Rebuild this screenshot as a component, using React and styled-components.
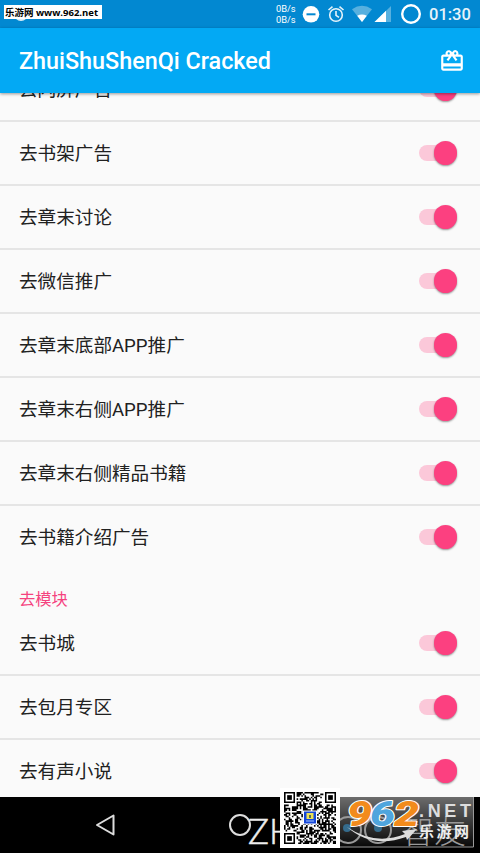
import React from 'react';
import styled, { createGlobalStyle } from 'styled-components';

const GlobalStyle = createGlobalStyle`
  * {
    box-sizing: border-box;
  }

  body {
    margin: 0;
    background: #000;
    font-family: Roboto, 'Noto Sans CJK SC', sans-serif;
  }
`;

const Screen = styled.div`
  position: relative;
  display: flex;
  flex-direction: column;
  width: 480px;
  height: 853px;
  overflow: hidden;
  background: #fafafa;
`;

const StatusBar = styled.div`
  display: flex;
  align-items: center;
  justify-content: flex-end;
  flex: none;
  height: 28px;
  padding-right: 9px;
  background: #0288d1;
  color: #fff;
`;

const NetSpeed = styled.div`
  width: 22px;
  margin-right: 4px;
  font-size: 9.3px;
  line-height: 11px;
  white-space: nowrap;
`;

const Clock = styled.div`
  width: 42px;
  margin-left: 7px;
  padding-top: 2px;
  font-size: 16.5px;
  font-weight: 500;
  line-height: 28px;
  color: #e6f3fa;
  white-space: nowrap;
`;

const SiteTag = styled.div`
  position: absolute;
  top: 5px;
  left: 4px;
  width: 98px;
  height: 14px;
  padding-left: 1px;
  background: #fff;
  color: #000;
  font-family: 'Open Sans', 'Noto Sans CJK SC', sans-serif;
  font-size: 9.5px;
  font-weight: 700;
  line-height: 15px;
  white-space: nowrap;
`;

const HiddenDot = styled.div`
  position: absolute;
  top: 7px;
  left: 14px;
  width: 14px;
  height: 14px;
  border-radius: 50%;
  background: #d9edf8;
`;

const AppBar = styled.header`
  position: relative;
  z-index: 1;
  display: flex;
  align-items: center;
  justify-content: space-between;
  flex: none;
  height: 65px;
  padding: 1px 15px 0 19px;
  background: #03a9f4;
  box-shadow: 0 1px 3px rgba(0, 0, 0, 0.4);
`;

const Title = styled.h1`
  margin: 0;
  color: #fff;
  font-size: 23.35px;
  font-weight: 500;
  line-height: 32px;
`;

const List = styled.main`
  flex: 1;
  min-height: 0;
  overflow: hidden;
`;

const Section = styled.section`
  margin-top: ${({ $scrolled }) => ($scrolled ? '-35px' : '0')};
`;

const Row = styled.div`
  display: flex;
  align-items: center;
  justify-content: space-between;
  height: 64px;
  padding: 0 25px 0 19px;
  border-bottom: 2px solid #e5e5e5;

  &:last-child {
    border-bottom-color: transparent;
  }
`;

const Label = styled.span`
  padding-top: 2px;
  color: #212121;
  font-size: 18.6px;
  line-height: 28px;
`;

const SectionTitle = styled.h2`
  height: 42px;
  margin: 0;
  padding: 18px 19px 0;
  color: #f5427e;
  font-size: 16.3px;
  font-weight: 400;
  line-height: 24px;
`;

const Track = styled.span`
  display: flex;
  align-items: center;
  justify-content: flex-end;
  width: 36px;
  height: 16px;
  border-radius: 8px;
  background: #fbc8d9;
`;

const Thumb = styled.span`
  flex: none;
  width: 23.5px;
  height: 23.5px;
  margin-right: -2px;
  border-radius: 50%;
  background: #fc4080;
  box-shadow: 0 1px 2px rgba(0, 0, 0, 0.4);
`;

const NavBar = styled.nav`
  display: flex;
  align-items: center;
  flex: none;
  height: 56px;
  padding-left: 94px;
  background: #000;
`;

const HomeIcon = styled.svg`
  margin-left: 111px;
`;

const Watermark = styled.div`
  position: absolute;
  top: 811px;
  left: 248px;
  color: #eee;
  font-family: Lato, 'Noto Sans CJK SC', sans-serif;
  font-size: 35px;
  font-weight: 300;
  line-height: 38px;
  white-space: nowrap;
  -webkit-text-stroke: 0.5px #eee;
`;

const QrCode = styled.svg`
  position: absolute;
  top: 788px;
  left: 280px;
`;

const SiteLogo = styled.svg`
  position: absolute;
  top: 797px;
  left: 340px;
`;

const adRows = [
  '去闪屏广告',
  '去书架广告',
  '去章末讨论',
  '去微信推广',
  '去章末底部APP推广',
  '去章末右侧APP推广',
  '去章末右侧精品书籍',
  '去书籍介绍广告',
];

const moduleRows = ['去书城', '去包月专区', '去有声小说'];

const QR_SIZE = 33;
const FINDERS = [[0, 0], [QR_SIZE - 7, 0], [0, QR_SIZE - 7]];

const buildModules = () => {
  let seed = 962;
  let d = '';
  for (let y = 0; y < QR_SIZE; y += 1) {
    for (let x = 0; x < QR_SIZE; x += 1) {
      seed = (seed * 1103515245 + 12345) % 2147483648;
      const inFinder = FINDERS.some(([fx, fy]) => x >= fx - 1 && x <= fx + 7 && y >= fy - 1 && y <= fy + 7);
      if (!inFinder && seed / 2147483648 > 0.48) d += `M${x} ${y}h1v1h-1z`;
    }
  }
  return d;
};

const qrPath = buildModules();

const SettingRow = ({ label }) => (
  <Row>
    <Label>{label}</Label>
    <Track>
      <Thumb />
    </Track>
  </Row>
);

const StatusIcons = () => (
  <svg width="120" height="28" viewBox="0 0 120 28" fill="none">
    <circle cx="9" cy="14.3" r="8.3" fill="#fff" />
    <path d="M4.5 14.3h9" stroke="#0288d1" strokeWidth="2" />
    <g stroke="#e6f3fa" strokeWidth="1.6">
      <circle cx="34" cy="15" r="6.3" />
      <path d="M34 11v4.3l3 2M26.5 10l4-3.4M41.5 10l-4-3.4" />
    </g>
    <path d="M50 9.2Q60 2.5 70 9.2L60 22z" fill="#57b0df" />
    <path d="M55.2 15.8Q60 13 64.8 15.8L60 22z" fill="#fff" />
    <path d="M89 6v16H72.5z" fill="#57b0df" />
    <path d="M84 10.8V22H72.5z" fill="#fff" />
    <circle cx="109" cy="14" r="8.8" stroke="#fff" strokeWidth="2.4" />
  </svg>
);

const GiftIcon = () => (
  <svg width="26" height="26" viewBox="0 0 24 24" fill="#fff">
    <path d="M20 6h-2.18c.11-.31.18-.65.18-1a2.996 2.996 0 0 0-5.5-1.65l-.5.67-.5-.68C10.96 2.54 10.05 2 9 2 7.34 2 6 3.34 6 5c0 .35.07.69.18 1H4c-1.11 0-1.99.89-1.99 2L2 19c0 1.11.89 2 2 2h16c1.11 0 2-.89 2-2V8c0-1.11-.89-2-2-2zm-5-2c.55 0 1 .45 1 1s-.45 1-1 1-1-.45-1-1 .45-1 1-1zM9 4c.55 0 1 .45 1 1s-.45 1-1 1-1-.45-1-1 .45-1 1-1zm11 15H4v-2h16v2zm0-5H4V8h5.08L7 10.83 8.62 12 12 7.4l3.38 4.6L17 10.83 14.92 8H20v6z" />
  </svg>
);

const App = () => (
  <>
    <GlobalStyle />
    <Screen>
      <StatusBar>
        <NetSpeed>
          <div>0B/s</div>
          <div>0B/s</div>
        </NetSpeed>
        <StatusIcons />
        <Clock>01:30</Clock>
      </StatusBar>
      <HiddenDot />
      <SiteTag>乐游网 www.962.net</SiteTag>
      <AppBar>
        <Title>ZhuiShuShenQi Cracked</Title>
        <GiftIcon />
      </AppBar>
      <List>
        <Section $scrolled>
          {adRows.map((label) => <SettingRow key={label} label={label} />)}
        </Section>
        <Section>
          <SectionTitle>去模块</SectionTitle>
          {moduleRows.map((label) => <SettingRow key={label} label={label} />)}
        </Section>
      </List>
      <NavBar>
        <svg width="24" height="24" viewBox="0 0 24 24" fill="none">
          <path d="M3 12L19.5 2.5v19z" stroke="#ddd" strokeWidth="2" strokeLinejoin="round" />
        </svg>
        <HomeIcon width="24" height="24" viewBox="0 0 24 24" fill="none">
          <circle cx="11" cy="12" r="10" stroke="#ddd" strokeWidth="2" />
        </HomeIcon>
      </NavBar>
      <Watermark>ZH</Watermark>
      <SiteLogo width="140" height="56" viewBox="0 0 140 56">
        <defs>
          <linearGradient id="panel" x1="0" y1="0" x2="0" y2="1">
            <stop offset="0" stopColor="#6c6c6c" />
            <stop offset="1" stopColor="#080808" />
          </linearGradient>
        </defs>
        <path d="M0 0h134v50H0z" fill="url(#panel)" />
        <path d="M0 50h133.5V0" fill="none" stroke="#999" />
        <g fill="none" stroke="#999" strokeWidth="2">
          <circle cx="8" cy="33" r="13" />
          <circle cx="38" cy="33" r="13" />
        </g>
        <circle cx="7" cy="31" r="4" fill="#356b8c" />
        <circle cx="38" cy="31" r="4" fill="#356b8c" />
        <text x="62" y="46" fill="#999" fontFamily="Noto Sans CJK SC, sans-serif" fontSize="32" fontWeight="300" textLength="64">智友</text>
        <path d="M7 30Q35 49 65 37L62 34L77 32L67 43L66 40Q32 52 7 30z" fill="#ddd" />
        <g fontFamily="Roboto, sans-serif" fontSize="35" fontWeight="900" fontStyle="italic" stroke="#fff" strokeWidth="2" strokeLinejoin="round" paintOrder="stroke">
          <text x="7" y="28.5" fill="#f28b1c" textLength="25" lengthAdjust="spacingAndGlyphs">9</text>
          <text x="30" y="28.5" fill="#4fa5dd" textLength="25" lengthAdjust="spacingAndGlyphs">6</text>
          <text x="54" y="28.5" fill="#f28b1c" textLength="25" lengthAdjust="spacingAndGlyphs">2</text>
        </g>
        <text x="79" y="20" fill="#ddd" fontFamily="Liberation Sans, sans-serif" fontSize="18" fontWeight="700" textLength="52">.NET</text>
        <text x="79" y="40" fill="#eee" fontFamily="Noto Sans CJK SC, sans-serif" fontSize="15" fontWeight="700" textLength="50">乐游网</text>
      </SiteLogo>
      <QrCode width="60" height="60" viewBox="0 0 60 60">
        <rect width="60" height="60" fill="#fff" />
        <g transform="translate(4 4) scale(1.576)">
          <path d={qrPath} fill="#000" />
          {FINDERS.map(([x, y]) => (
            <g key={`${x}-${y}`} transform={`translate(${x} ${y})`}>
              <path d="M.5.5h6v6h-6z" fill="none" stroke="#000" />
              <path d="M2 2h3v3H2z" />
            </g>
          ))}
        </g>
        <rect x="23.5" y="23" width="13" height="13" fill="#1546d8" stroke="#fff" />
        <path d="M26.5 25h7v6h-7z" fill="#ebdf55" />
        <path d="M29 27h2v3h-2z" fill="#536f59" />
        <path d="M26 33h8" stroke="#a3c4fa" />
      </QrCode>
    </Screen>
  </>
);

export default App;
